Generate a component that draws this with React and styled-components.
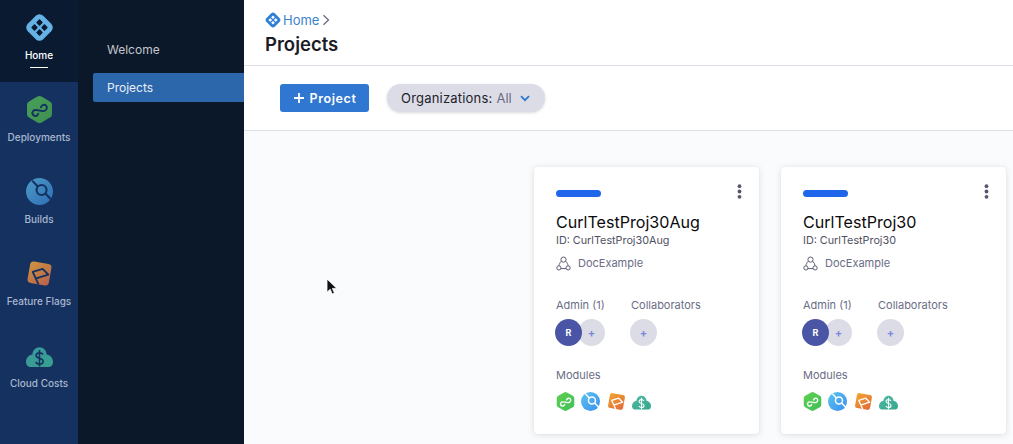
import React, { useId } from 'react';
import styled, { createGlobalStyle } from 'styled-components';

const GlobalStyle = createGlobalStyle`
  html, body { margin: 0; padding: 0; height: 100%; overflow: hidden; }
  body { font-family: Inter, "Liberation Sans", sans-serif; background: #fafbfc; }
  * { box-sizing: border-box; }
`;

const Page = styled.div`
  position: relative;
  display: flex;
  width: 1013px;
  height: 444px;
  overflow: hidden;
`;

const Rail = styled.nav`
  width: 78px;
  flex: none;
  background: #14315f;
`;

const RailItem = styled.div`
  position: relative;
  height: 82px;
  display: flex;
  flex-direction: column;
  align-items: center;
  padding-top: 13px;
  background: ${(props) => (props.$active ? '#0a1a30' : 'transparent')};

  ${(props) => props.$active && `
    &::after {
      content: '';
      position: absolute;
      left: 30px;
      top: 67px;
      width: 18px;
      height: 1px;
      background: #fff;
    }
  `}
`;

const RailIcon = styled.div`
  height: 29px;
  display: flex;
  align-items: center;
  justify-content: center;
`;

const RailLabel = styled.span`
  margin-top: 7px;
  font-size: 10px;
  line-height: 13px;
  font-weight: 500;
  white-space: nowrap;
  color: ${(props) => (props.$active ? '#ffffff' : '#a9b7cf')};
`;

const SideMenu = styled.aside`
  width: 166px;
  flex: none;
  background: #0b1829;
  padding: 35px 0 0 15px;
`;

const MenuLink = styled.div`
  height: 29px;
  margin-bottom: 9px;
  padding-left: 14px;
  display: flex;
  align-items: center;
  font-size: 12px;
  border-radius: 2px 0 0 2px;
  color: ${(props) => (props.$active ? '#e8eef7' : '#c3c6cc')};
  background: ${(props) => (props.$active ? '#2c67ac' : 'transparent')};
`;

const Main = styled.main`
  flex: 1;
  min-width: 0;
  display: flex;
  flex-direction: column;
`;

const Header = styled.header`
  height: 66px;
  flex: none;
  padding: 11px 0 0 21px;
  background: #fff;
  border-bottom: 1px solid #dfe0e8;
`;

const Crumbs = styled.div`
  display: flex;
  align-items: center;
  height: 18px;
  gap: 2px;
  font-size: 13px;
  color: #3b82d0;
`;

const PageTitle = styled.h1`
  margin: 4px 0 0;
  font-size: 18.5px;
  line-height: 22px;
  font-weight: 600;
  color: #1c1c28;
`;

const Toolbar = styled.div`
  height: 65px;
  flex: none;
  display: flex;
  align-items: center;
  gap: 18px;
  padding-left: 36px;
  background: #fff;
  border-bottom: 1px solid #dfe0e8;
`;

const AddButton = styled.button`
  width: 89px;
  height: 28px;
  padding: 0;
  border: 0;
  border-radius: 3px;
  display: flex;
  align-items: center;
  justify-content: center;
  gap: 5px;
  font: 600 12.5px Inter, sans-serif;
  letter-spacing: 0.6px;
  color: #fff;
  background: #2f77d0;
`;

const FilterPill = styled.div`
  width: 158px;
  height: 28px;
  padding-left: 14px;
  border-radius: 14px;
  display: flex;
  align-items: center;
  font-size: 13px;
  letter-spacing: 0.2px;
  color: #22222a;
  background: #dcdce6;
  box-shadow: 0 1px 3px rgba(40, 41, 61, 0.18);
`;

const FilterValue = styled.span`
  margin-left: 4px;
  letter-spacing: 0;
  color: #6b6d85;
`;

const Chevron = styled.svg`
  margin-left: 8px;
`;

const Content = styled.section`
  flex: 1;
  display: flex;
  justify-content: flex-end;
  gap: 22px;
  padding: 36px 7px 0 0;
  background: #fafbfc;
`;

const Card = styled.article`
  position: relative;
  width: 225px;
  height: 267px;
  flex: none;
  padding: 23px 0 0 22px;
  background: #fff;
  border-radius: 4px;
  box-shadow: 0 0 1px rgba(40, 41, 61, 0.08), 0 1px 6px rgba(96, 97, 112, 0.18);
`;

const ColorBar = styled.div`
  width: 45px;
  height: 7px;
  border-radius: 4px;
  background: #1f66ea;
`;

const MoreDots = styled.svg`
  position: absolute;
  top: 17px;
  right: 17px;
`;

const CardTitle = styled.h2`
  margin: 15px 0 0;
  font-size: 16.1px;
  line-height: 20px;
  font-weight: 400;
  color: #0b0b0d;
`;

const ProjectId = styled.div`
  margin-top: 2px;
  font-size: 10.8px;
  line-height: 14px;
  color: #4f5162;
`;

const OrgRow = styled.div`
  margin-top: 6px;
  height: 18px;
  display: flex;
  align-items: center;
  gap: 7px;
  font-size: 11px;
  color: #6b6d85;
`;

const People = styled.div`
  margin-top: 26px;
  display: flex;
`;

const PeopleGroup = styled.div`
  width: ${(props) => props.$width}px;
`;

const SectionLabel = styled.div`
  font-size: 11px;
  line-height: 14px;
  color: #6b6d85;
`;

const AvatarRow = styled.div`
  display: flex;
  margin: 7px 0 0 -1px;
`;

const Avatar = styled.div`
  width: 27px;
  height: 27px;
  flex: none;
  border-radius: 50%;
  display: flex;
  align-items: center;
  justify-content: center;
  font-weight: 700;
  position: relative;
  font-size: ${(props) => (props.$filled ? '9px' : '11px')};
  color: ${(props) => (props.$filled ? '#fff' : '#7d86dd')};
  background: ${(props) => (props.$filled ? '#4a55a5' : '#dcdce6')};
  z-index: ${(props) => (props.$filled ? 1 : 0)};
  margin-left: ${(props) => (props.$overlap ? '-4px' : '0')};
`;

const ModulesBlock = styled.div`
  margin-top: 22px;
`;

const ModuleRow = styled.div`
  display: flex;
  align-items: center;
  gap: 6.3px;
  margin-top: 9px;
  height: 20px;
`;

const Cursor = styled.svg`
  position: absolute;
  left: 326px;
  top: 278px;
`;

const HarnessMark = ({ size, color, hole }) => (
  <svg width={size} height={size} viewBox="0 0 28 28">
    <rect x="3.5" y="3.5" width="21" height="21" rx="5" transform="rotate(45 14 14)" fill={color} />
    <g fill={hole} transform="rotate(45 14 14)">
      <rect x="8.2" y="8.2" width="4.8" height="4.8" rx=".8" />
      <rect x="15" y="8.2" width="4.8" height="4.8" rx=".8" />
      <rect x="8.2" y="15" width="4.8" height="4.8" rx=".8" />
      <rect x="15" y="15" width="4.8" height="4.8" rx=".8" />
    </g>
  </svg>
);

const DeploymentIcon = ({ size, muted }) => {
  const id = useId();
  const stroke = muted ? '#14315f' : '#ffffff';
  return (
    <svg width={size} height={size} viewBox="0 0 26 26">
      <defs>
        <linearGradient id={id} x1="0" y1="0" x2="1" y2="1">
          <stop offset="0" stopColor={muted ? '#48a05a' : '#5fd04f'} />
          <stop offset="1" stopColor={muted ? '#3f8f4f' : '#3fbf5a'} />
        </linearGradient>
      </defs>
      <path d="M11 .6a4 4 0 0 1 4 0l8 4.6a3.6 3.6 0 0 1 2 3.1v9.4a3.6 3.6 0 0 1-2 3.1l-8 4.6a4 4 0 0 1-4 0l-8-4.6a3.6 3.6 0 0 1-2-3.1V8.3a3.6 3.6 0 0 1 2-3.1z" fill={`url(#${id})`} />
      <g transform="rotate(-28 13 13) translate(13 13) scale(1.15) translate(-13 -13)">
        <path d="M10.5 15.6c-1.4 1.6-4.4.9-4.4-1.7 0-2.3 2.7-3.1 4.2-1.8l4.6 3.4c1.6 1.2 4.6.3 4.6-2.2 0-2.3-3-3-4.5-1.4" fill="none" stroke={stroke} strokeWidth="1.6" strokeLinecap="round" />
      </g>
    </svg>
  );
};

const BuildIcon = ({ size, muted }) => {
  const id = useId();
  const stroke = muted ? '#14315f' : '#ffffff';
  return (
    <svg width={size} height={size} viewBox="0 0 26 26">
      <defs>
        <linearGradient id={id} x1="0" y1="0" x2="1" y2="1">
          <stop offset="0" stopColor={muted ? '#4c9cc8' : '#5cc4ee'} />
          <stop offset="1" stopColor={muted ? '#2f6cb4' : '#3a8ff0'} />
        </linearGradient>
      </defs>
      <circle cx="13" cy="13" r="13" fill={`url(#${id})`} />
      <circle cx="15" cy="11.5" r="4.8" fill="none" stroke={stroke} strokeWidth="2" />
      <path d="M6 2.5 11.4 8.2M18.6 15 24 20.5" stroke={stroke} strokeWidth="2" />
    </svg>
  );
};

const FlagIcon = ({ size, muted }) => {
  const id = useId();
  const stroke = muted ? '#14315f' : '#ffffff';
  return (
    <svg width={size} height={size} viewBox="0 0 26 26">
      <defs>
        <linearGradient id={id} x1="0" y1="0" x2="1" y2="1">
          <stop offset="0" stopColor={muted ? '#cf9440' : '#f3a52f'} />
          <stop offset="1" stopColor={muted ? '#b7604e' : '#e0683a'} />
        </linearGradient>
      </defs>
      <rect x="2.6" y="2.6" width="20.8" height="20.8" rx="3.5" transform="rotate(10 13 13)" fill={`url(#${id})`} />
      <path d="M12 23.5 6.5 11.5 16 8.5 21.5 14 9 18" fill="none" stroke={stroke} strokeWidth="1.8" strokeLinejoin="round" />
    </svg>
  );
};

const CostIcon = ({ size, muted }) => {
  const id = useId();
  const stroke = muted ? '#14315f' : '#ffffff';
  return (
    <svg width={size} height={size} viewBox="0 0 26 26">
      <defs>
        <linearGradient id={id} x1="0" y1="0" x2="1" y2="1">
          <stop offset="0" stopColor={muted ? '#3c97a0' : '#4fb8a4'} />
          <stop offset="1" stopColor={muted ? '#37a08c' : '#35a88c'} />
        </linearGradient>
      </defs>
      <g transform="translate(0 2.2) scale(1 1.12)">
        <path d="M13 2.5c3.6 0 6.5 2.6 6.9 6.2 3.3.3 6.1 2.9 6.1 6.4 0 .9-.2 1.8-.6 2.6-.8 1.2-1.8 1.8-3.1 1.8H3.7c-1.3 0-2.3-.6-3.1-1.8-.4-.8-.6-1.7-.6-2.6 0-3.5 2.8-6.1 6.1-6.4.4-3.6 3.3-6.2 6.9-6.2z" fill={`url(#${id})`} />
        <path d="M16.4 8.8c-.6-.9-1.9-1.5-3.4-1.5-1.9 0-3.3.9-3.3 2.4 0 3.2 6.8 1.6 6.8 4.8 0 1.6-1.5 2.5-3.5 2.5-1.6 0-3-.6-3.7-1.8M13 5v14.2" fill="none" stroke={stroke} strokeWidth="1.5" />
      </g>
    </svg>
  );
};

const OrgIcon = () => (
  <svg width="15" height="15" viewBox="0 0 15 15" fill="none" stroke="#5c5e72" strokeWidth="1">
    <circle cx="7.5" cy="3.6" r="2.6" />
    <circle cx="2.9" cy="11.9" r="2.1" />
    <circle cx="12.1" cy="11.9" r="2.1" />
    <path d="M5.3 5.2C4 6.5 3.2 8 2.9 9.8M9.7 5.2c1.3 1.3 2.1 2.8 2.4 4.6M5 12.6h5" />
  </svg>
);

const railItems = [
  { label: 'Deployments', Icon: DeploymentIcon },
  { label: 'Builds', Icon: BuildIcon },
  { label: 'Feature Flags', Icon: FlagIcon },
  { label: 'Cloud Costs', Icon: CostIcon },
];

const projects = ['CurlTestProj30Aug', 'CurlTestProj30'];

const ProjectCard = ({ name }) => (
  <Card>
    <ColorBar />
    <MoreDots width="5" height="15" viewBox="0 0 5 15" fill="#55576d">
      <circle cx="2.5" cy="2.2" r="1.9" />
      <circle cx="2.5" cy="7.5" r="1.9" />
      <circle cx="2.5" cy="12.8" r="1.9" />
    </MoreDots>
    <CardTitle>{name}</CardTitle>
    <ProjectId>ID: {name}</ProjectId>
    <OrgRow><OrgIcon />DocExample</OrgRow>
    <People>
      <PeopleGroup $width={75}>
        <SectionLabel>Admin (1)</SectionLabel>
        <AvatarRow>
          <Avatar $filled>R</Avatar>
          <Avatar $overlap>+</Avatar>
        </AvatarRow>
      </PeopleGroup>
      <PeopleGroup $width={90}>
        <SectionLabel>Collaborators</SectionLabel>
        <AvatarRow>
          <Avatar>+</Avatar>
        </AvatarRow>
      </PeopleGroup>
    </People>
    <ModulesBlock>
      <SectionLabel>Modules</SectionLabel>
      <ModuleRow>
        <DeploymentIcon size={19} />
        <BuildIcon size={19} />
        <FlagIcon size={19} />
        <CostIcon size={19} />
      </ModuleRow>
    </ModulesBlock>
  </Card>
);

export default function App() {
  return (
    <Page>
      <GlobalStyle />
      <Rail>
        <RailItem $active>
          <RailIcon><HarnessMark size={29} color="#66b2e6" hole="#0a1a30" /></RailIcon>
          <RailLabel $active>Home</RailLabel>
        </RailItem>
        {railItems.map(({ label, Icon }) => (
          <RailItem key={label}>
            <RailIcon><Icon size={27} muted /></RailIcon>
            <RailLabel>{label}</RailLabel>
          </RailItem>
        ))}
      </Rail>
      <SideMenu>
        <MenuLink>Welcome</MenuLink>
        <MenuLink $active>Projects</MenuLink>
      </SideMenu>
      <Main>
        <Header>
          <Crumbs>
            <HarnessMark size={16} color="#2f7fd6" hole="#ffffff" />
            Home
            <svg width="10" height="12" viewBox="0 0 10 12" fill="none" stroke="#6b6d85" strokeWidth="1.3">
              <path d="M2.5 1.2 7.5 6l-5 4.8" />
            </svg>
          </Crumbs>
          <PageTitle>Projects</PageTitle>
        </Header>
        <Toolbar>
          <AddButton>
            <svg width="12" height="12" viewBox="0 0 12 12" stroke="#fff" strokeWidth="1.8">
              <path d="M6 1v10M1 6h10" />
            </svg>
            Project
          </AddButton>
          <FilterPill>
            Organizations:
            <FilterValue>All</FilterValue>
            <Chevron width="10" height="7" viewBox="0 0 10 7" fill="none" stroke="#2f77d0" strokeWidth="1.8">
              <path d="M1 1.2 5 5.2l4-4" />
            </Chevron>
          </FilterPill>
        </Toolbar>
        <Content>
          {projects.map((name) => <ProjectCard key={name} name={name} />)}
        </Content>
      </Main>
      <Cursor width="12" height="18" viewBox="0 0 12 18">
        <path d="M1 1v13.2l3.2-3 2 4.8 2.2-1-2-4.6h4.4z" fill="#111" stroke="#fff" strokeWidth=".8" />
      </Cursor>
    </Page>
  );
}
